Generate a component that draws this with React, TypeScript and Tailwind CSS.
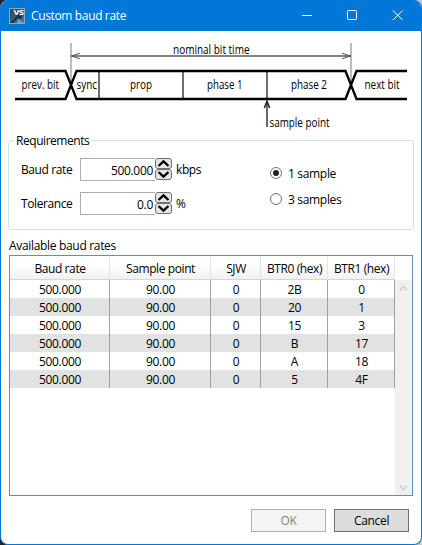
import type { ReactNode } from 'react';

const columns = [
  { label: 'Baud rate', width: 'w-[100px]' },
  { label: 'Sample point', width: 'w-[101px]' },
  { label: 'SJW', width: 'w-[50px]' },
  { label: 'BTR0 (hex)', width: 'w-[67px]' },
  { label: 'BTR1 (hex)', width: 'w-[67px]' },
];

const rows = [
  ['500.000', '90.00', '0', '2B', '0'],
  ['500.000', '90.00', '0', '20', '1'],
  ['500.000', '90.00', '0', '15', '3'],
  ['500.000', '90.00', '0', 'B', '17'],
  ['500.000', '90.00', '0', 'A', '18'],
  ['500.000', '90.00', '0', '5', '4F'],
];

const bitLabels = [
  { text: 'prev. bit', x: 21.5, width: 37.5 },
  { text: 'sync', x: 76.5, width: 20.5 },
  { text: 'prop', x: 130, width: 22 },
  { text: 'phase 1', x: 207, width: 35.5 },
  { text: 'phase 2', x: 291, width: 36 },
  { text: 'next bit', x: 364.5, width: 35 },
];

function AppIcon() {
  return (
    <svg width="16" height="16" viewBox="0 0 16 16" className="shrink-0">
      <defs>
        <linearGradient id="tile" x1="0" y1="0" x2="1" y2="1">
          <stop offset="0" stopColor="#24465f" />
          <stop offset="1" stopColor="#47799c" />
        </linearGradient>
      </defs>
      <rect x="0.5" y="0.5" width="15" height="15" fill="url(#tile)" stroke="#8fa9bb" />
      <path d="M1 15 L8 8 L6 4 L9 6 L11 8 L14 7 L12 11 L9 10 L4 15 Z" fill="#12324b" />
      <path d="M9 11 L15 15 L8 15 Z" fill="#7ba0b9" />
      <text x="4.5" y="6.5" fontSize="7" fontWeight="700" fill="#ffffff" textLength="10" lengthAdjust="spacingAndGlyphs">
        VS
      </text>
    </svg>
  );
}

function TitleBar() {
  return (
    <div className="flex h-[31px] shrink-0 items-center bg-[#0078d7] pl-2 text-white">
      <AppIcon />
      <span className="ml-1.5 pt-px tracking-[-0.36px]">Custom baud rate</span>
      <svg width="104" height="15" viewBox="0 0 104 15" className="ml-auto mr-[17px]" fill="none" stroke="#ffffff">
        <path d="M2 7.5 H12" />
        <rect x="47.5" y="2.5" width="9" height="9" rx="1" />
        <path d="M93 2.5 L102.5 12 M102.5 2.5 L93 12" />
      </svg>
    </div>
  );
}

function BitTiming() {
  return (
    <svg width="420" height="101" viewBox="1 31 420 101" className="shrink-0" fill="none" stroke="#000000">
      <path d="M71 43 V85 M351 43 V85" stroke="#bcbcbc" strokeWidth="2" />
      <path d="M71 56 H351" stroke="#5a5a5a" strokeWidth="1.4" />
      <path d="M80 53.2 L71.5 56 L80 58.8 M342 53.2 L350.5 56 L342 58.8" stroke="#555555" />
      <path d="M99 71 V99 M183 71 V99 M267 71 V99" stroke="#4a4a4a" strokeWidth="1.6" />
      <path
        d="M15 71 H65.5 L76.5 99 H345.5 L356.5 71 H407 M15 99 H65.5 L76.5 71 H345.5 L356.5 99 H407"
        strokeWidth="2.3"
      />
      <path d="M267 101 V127" stroke="#444444" strokeWidth="1.6" />
      <path d="M264.3 108 L267 101 L269.7 108" stroke="#222222" strokeWidth="1.5" />
      <g fill="#000000" stroke="none" className="text-[12px] tracking-normal">
        <text x="173" y="54" textLength="76.5" lengthAdjust="spacingAndGlyphs">nominal bit time</text>
        {bitLabels.map((label) => (
          <text key={label.text} x={label.x} y="89" textLength={label.width} lengthAdjust="spacingAndGlyphs">
            {label.text}
          </text>
        ))}
        <text x="269.5" y="127" textLength="60" lengthAdjust="spacingAndGlyphs">sample point</text>
      </g>
    </svg>
  );
}

function SpinButton({ d }: { d: string }) {
  return (
    <button className="block h-[11px] w-[17px] rounded-[3px] border border-[#707070] bg-[#e6e6e6]">
      <svg width="15" height="9" viewBox="0 0 15 9" fill="none" stroke="#000000" strokeWidth="2.3">
        <path d={d} />
      </svg>
    </button>
  );
}

function SpinField({ label, value, unit }: { label: string; value: string; unit: string }) {
  return (
    <div className="flex h-[23px] items-center">
      <span className="w-[59px] pt-px tracking-[-0.4px]">{label}</span>
      <div className="h-[23px] w-[75px] border border-r-0 border-[#abadb3] bg-white pr-[2px] text-right leading-[23px]">
        {value}
      </div>
      <div className="mb-px">
        <SpinButton d="M2.5 7 L7.5 2.4 L12.5 7" />
        <SpinButton d="M2.5 2 L7.5 6.6 L12.5 2" />
      </div>
      <span className="ml-1 pt-px tracking-[-0.4px]">{unit}</span>
    </div>
  );
}

function Radio({ checked, children }: { checked?: boolean; children: ReactNode }) {
  return (
    <label className="flex h-[26px] items-center gap-1.5">
      <span className="mb-0.5 flex size-3 items-center justify-center rounded-full border border-[#707070] bg-white">
        {checked && <span className="size-1.5 rounded-full bg-[#212121]" />}
      </span>
      {children}
    </label>
  );
}

function Requirements() {
  return (
    <fieldset className="relative ml-[7px] mt-2 flex h-[90px] w-[406px] shrink-0 rounded-[3px] border border-[#d5dfe5]">
      <span className="absolute -top-[9px] left-[5px] bg-white pr-[3px] pl-0.5 leading-[18px] tracking-[-0.45px]">
        Requirements
      </span>
      <div className="ml-3 flex w-[249px] flex-col gap-[11px] pt-[17px]">
        <SpinField label="Baud rate" value="500.000" unit="kbps" />
        <SpinField label="Tolerance" value="0.0" unit="%" />
      </div>
      <div className="pt-[20px]">
        <Radio checked>1 sample</Radio>
        <Radio>3 samples</Radio>
      </div>
    </fieldset>
  );
}

function RatesTable() {
  return (
    <div className="ml-2 flex h-[241px] w-[404px] shrink-0 flex-col border border-[#688caf] bg-white">
      <div className="flex h-6 shrink-0">
        {columns.map((col) => (
          <div
            key={col.label}
            className={`${col.width} border-r border-b border-r-[#e3e3e5] border-b-[#d5d5d5] bg-linear-to-b from-white from-40% to-[#f1f2f4] pl-px text-center leading-[25px] tracking-[-0.4px]`}
          >
            {col.label}
          </div>
        ))}
      </div>
      <div className="flex grow">
        <div>
          {rows.map((row, i) => (
            <div key={i} className="flex h-[18px] bg-white even:bg-[#e2e2e2]">
              {row.map((cell, j) => (
                <div
                  key={j}
                  className={`${columns[j].width} border-r border-[#a0a0a0] pl-px text-center leading-[19px]`}
                >
                  {cell}
                </div>
              ))}
            </div>
          ))}
        </div>
        <div className="flex w-[17px] flex-col items-center justify-between bg-[#f0f0f0] pt-1 pb-[3px]">
          <svg width="9" height="8" viewBox="0 0 9 8" fill="none" stroke="#cfcfcf" strokeWidth="1.5">
            <path d="M1 6.5 L4.5 2.5 L8 6.5" />
          </svg>
          <svg width="9" height="8" viewBox="0 0 9 8" fill="none" stroke="#cfcfcf" strokeWidth="1.5">
            <path d="M1 1.5 L4.5 5.5 L8 1.5" />
          </svg>
        </div>
      </div>
    </div>
  );
}

export default function App() {
  return (
    <div className="h-[545px] w-[422px] bg-linear-to-r from-[#222222] from-50% to-[#c8c8c8] to-50% font-['Open_Sans','Noto_Sans',sans-serif] text-[12px] tracking-[-0.32px] text-black">
      <div className="flex h-full flex-col overflow-hidden rounded-lg border border-t-0 border-[#0078d7] bg-white">
        <TitleBar />
        <BitTiming />
        <Requirements />
        <div className="ml-2 mt-[7px] h-[18px] shrink-0 leading-[18px]">Available baud rates</div>
        <RatesTable />
        <div className="mt-[13px] mr-3 flex justify-end gap-2">
          <button className="h-[23px] w-[75px] border border-[#adb2b5] bg-[#f4f4f4] leading-[22px] text-[#838383]">
            OK
          </button>
          <button className="h-[23px] w-[75px] border border-[#707070] bg-[#dddddd] leading-[22px]">Cancel</button>
        </div>
      </div>
    </div>
  );
}
